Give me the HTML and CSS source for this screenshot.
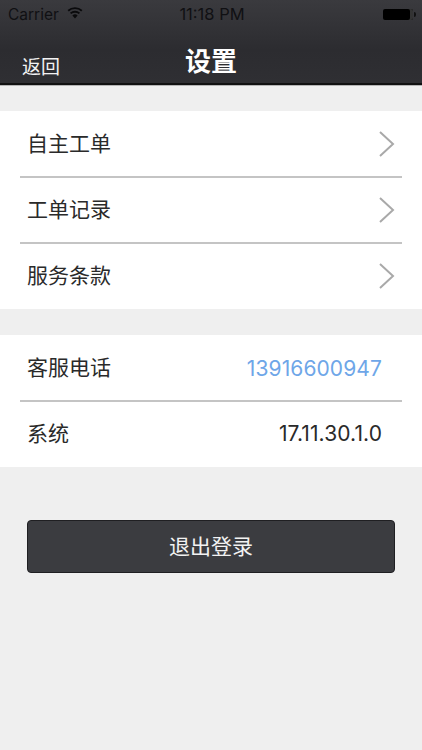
FILE: index.html
```html
<!DOCTYPE html>
<html lang="zh">
<head>
<meta charset="utf-8">
<title>设置</title>
<link rel="stylesheet" href="styles.css">
</head>
<body>
<header class="top">
  <div class="status">
    <div class="status-left">
      <span class="carrier">Carrier</span>
      <svg class="wifi" width="16" height="12" viewBox="0 0 16 12"><path d="M8 11.500 5.400 8.500a3.800 3.800 0 0 1 5.200 0Z" fill="#0a0a0c"/><path d="M3.600 6.400a6.500 6.500 0 0 1 8.800 0" fill="none" stroke="#0a0a0c" stroke-width="1.900"/><path d="M1.200 3.800a10 10 0 0 1 13.600 0" fill="none" stroke="#0a0a0c" stroke-width="1.900"/></svg>
    </div>
    <span class="time">11:18 PM</span>
    <div class="battery"><i class="batt-body"></i><i class="batt-tip"></i></div>
  </div>
  <nav class="nav">
    <span class="back">返回</span>
    <h1 class="title">设置</h1>
  </nav>
</header>
<main>
  <section class="group">
    <div class="row line"><span class="label">自主工单</span><svg class="chev" width="16" height="28" viewBox="0 0 16 28"><path d="M1 2 14 14 1 26" fill="none" stroke="#a9a9a9" stroke-width="2"/></svg></div>
    <div class="row line"><span class="label">工单记录</span><svg class="chev" width="16" height="28" viewBox="0 0 16 28"><path d="M1 2 14 14 1 26" fill="none" stroke="#a9a9a9" stroke-width="2"/></svg></div>
    <div class="row"><span class="label">服务条款</span><svg class="chev" width="16" height="28" viewBox="0 0 16 28"><path d="M1 2 14 14 1 26" fill="none" stroke="#a9a9a9" stroke-width="2"/></svg></div>
  </section>
  <section class="group">
    <div class="row line info"><span class="label">客服电话</span><span class="phone">13916600947</span></div>
    <div class="row info"><span class="label">系统</span><span class="version">17.11.30.1.0</span></div>
  </section>
  <div class="action"><button class="logout" type="button">退出登录</button></div>
</main>
</body>
</html>
```
FILE: styles.css
```css
* { box-sizing: border-box; }
html, body { margin: 0; height: 100%; }
body {
  width: 422px;
  height: 750px;
  overflow: hidden;
  background: #efefef;
  font-family: "Noto Sans CJK SC", "Liberation Sans", sans-serif;
  color: #2a2a2a;
}
.top {
  height: 85px;
  background: linear-gradient(#3a3a3e, #2c2c30 60%, #2f2f33);
  border-bottom: 2px solid #111;
  box-shadow: 0 1px 0 #b5b5b5;
}
.status {
  height: 28px;
  padding: 0 6px 0 8px;
  display: grid;
  grid-template-columns: 1fr auto 1fr;
  align-items: center;
  color: #101013;
  font-family: Inter, "Liberation Sans", sans-serif;
  font-size: 16px;
}
.status-left { display: flex; align-items: center; gap: 8px; }
.carrier { font-size: 15.500px; }
.time { font-size: 16.500px; }
.wifi { display: block; margin-top: -2px; }
.battery { display: flex; align-items: center; justify-content: flex-end; }
.batt-body {
  display: block;
  width: 30px;
  height: 11px;
  background: #000;
  border-radius: 2px;
  box-shadow: inset -3px 0 0 #333;
}
.batt-tip {
  display: block;
  width: 2px;
  height: 5px;
  margin-left: 1px;
  background: #111;
  border-radius: 0 2px 2px 0;
}
.nav {
  position: relative;
  height: 55px;
  display: flex;
  justify-content: center;
  align-items: flex-end;
  padding-bottom: 6px;
}
.back {
  position: absolute;
  left: 22px;
  bottom: 5px;
  color: #f2f2f2;
  font-size: 19px;
  line-height: 24px;
}
.title {
  margin: 0;
  color: #fff;
  font-size: 26px;
  font-weight: 700;
  line-height: 34px;
}
.group { background: #fff; margin-top: 26px; padding-top: 1px; }
.row {
  height: 66px;
  margin: 0 20px;
  padding: 0 7px;
  display: flex;
  justify-content: space-between;
  align-items: center;
  font-size: 21px;
  border-bottom: 2px solid transparent;
}
.row:last-child { height: 65px; }
.row.line { border-bottom-color: #c4c4c4; }
.label { padding-bottom: 4px; }
.chev { display: block; }
.info { padding-right: 20px; }
.phone, .version {
  font-family: Inter, "Liberation Sans", sans-serif;
  font-size: 21px;
  letter-spacing: 0.1px;
}
.phone { color: #6ea6e8; }
.version { color: #2a2a2a; }
.action { padding: 53px 27px 0; }
.logout {
  display: block;
  width: 100%;
  height: 53px;
  padding: 0 0 3px;
  background: #3b3c40;
  border: 1px solid #1f1f22;
  border-radius: 4px;
  color: #f2f2f2;
  font-family: inherit;
  font-size: 21px;
}
```
